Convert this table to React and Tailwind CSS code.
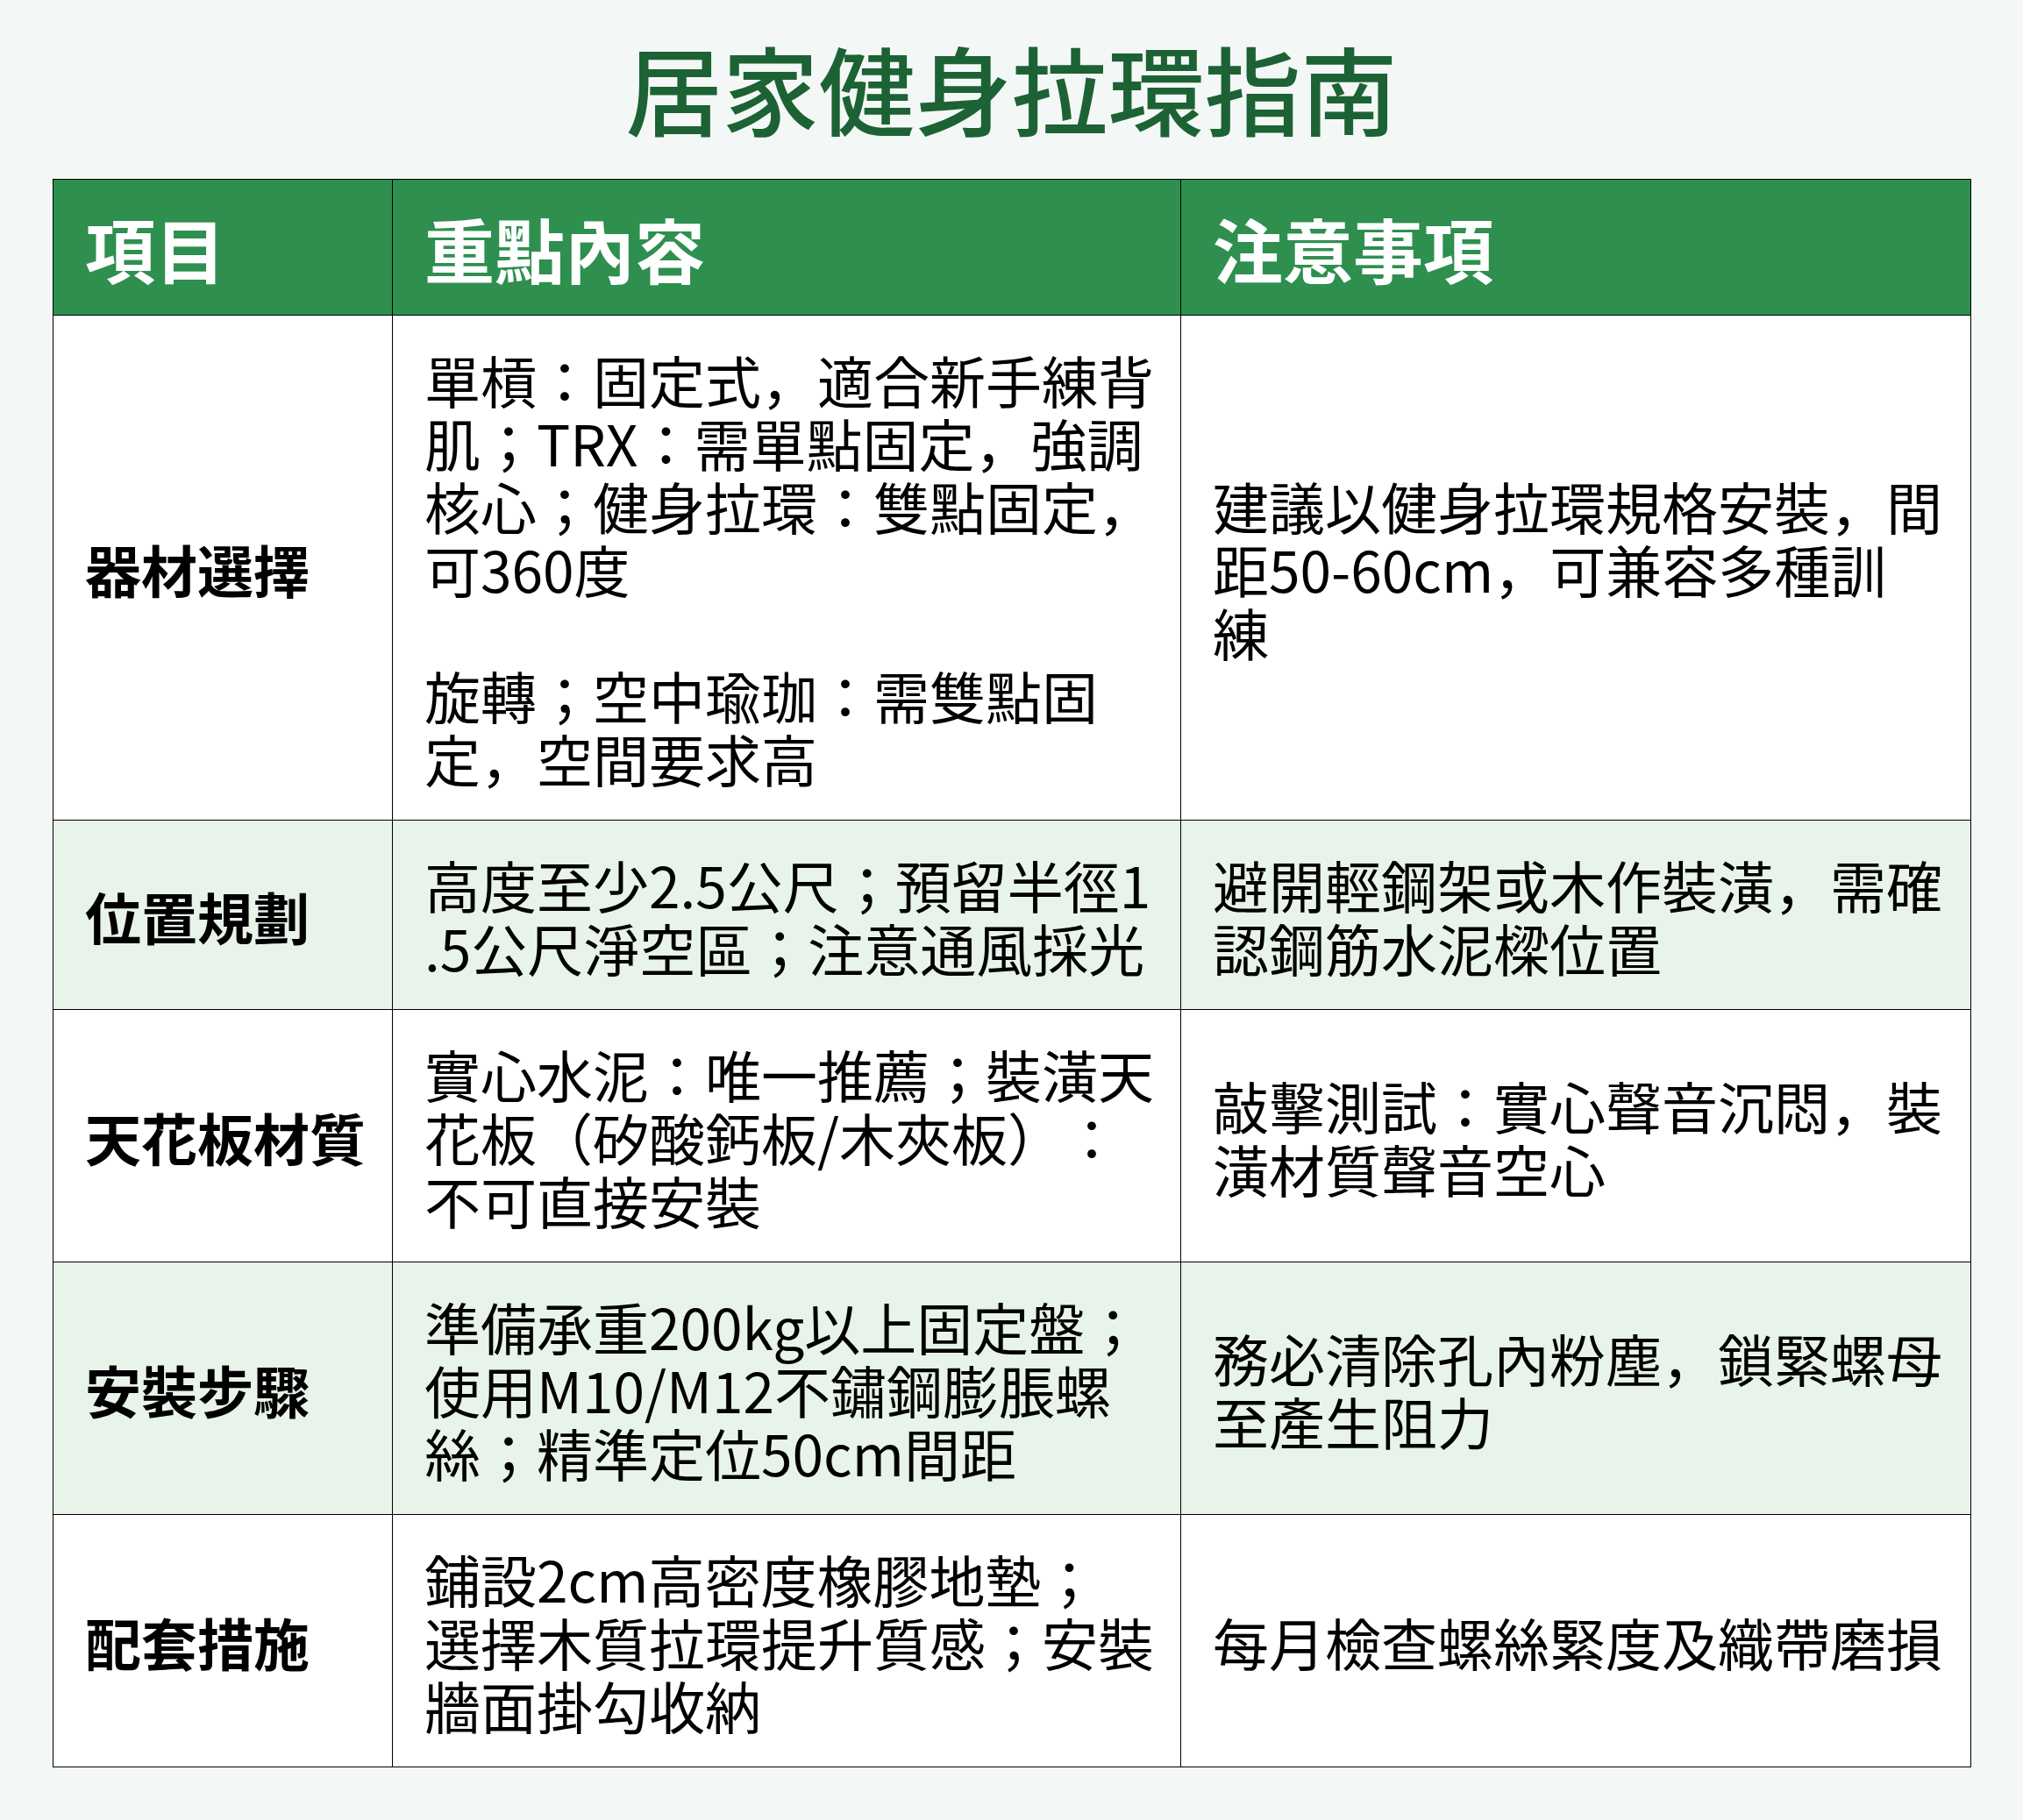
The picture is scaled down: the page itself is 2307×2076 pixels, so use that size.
import React from 'react';

const rows = [
  {
    item: '器材選擇',
    content: [
      '單槓：固定式，適合新手練背',
      '肌；TRX：需單點固定，強調',
      '核心；健身拉環：雙點固定，',
      '可360度',
      '',
      '旋轉；空中瑜珈：需雙點固',
      '定，空間要求高',
    ],
    note: ['建議以健身拉環規格安裝，間', '距50-60cm，可兼容多種訓', '練'],
  },
  {
    item: '位置規劃',
    content: ['高度至少2.5公尺；預留半徑1', '.5公尺淨空區；注意通風採光'],
    note: ['避開輕鋼架或木作裝潢，需確', '認鋼筋水泥樑位置'],
  },
  {
    item: '天花板材質',
    content: ['實心水泥：唯一推薦；裝潢天', '花板（矽酸鈣板/木夾板）：', '不可直接安裝'],
    note: ['敲擊測試：實心聲音沉悶，裝', '潢材質聲音空心'],
  },
  {
    item: '安裝步驟',
    content: ['準備承重200kg以上固定盤；', '使用M10/M12不鏽鋼膨脹螺', '絲；精準定位50cm間距'],
    note: ['務必清除孔內粉塵，鎖緊螺母', '至產生阻力'],
  },
  {
    item: '配套措施',
    content: ['鋪設2cm高密度橡膠地墊；', '選擇木質拉環提升質感；安裝', '牆面掛勾收納'],
    note: ['每月檢查螺絲緊度及織帶磨損'],
  },
];

const font = { fontFamily: '"Noto Sans CJK JP", "Noto Sans CJK TC", "Noto Sans", sans-serif' };

// each cell keeps the reference's own line breaks
const Lines = ({ lines }) =>
  lines.map((line, i) => (
    <span key={i} className="block min-h-[72px]">
      {line}
    </span>
  ));

const App = () => {
  return (
    <div style={font} className="min-h-[2076px] w-[2307px] bg-[#f3f8f6] [text-spacing-trim:space-all]">
      <h1 className="pt-[33px] pb-[39px] text-center text-[110px] leading-[132px] font-medium text-[#1d6234]">
        居家健身拉環指南
      </h1>
      <div className="px-[60px]">
        <table className="w-full table-fixed border-collapse border border-black">
          <colgroup>
            <col className="w-[387px]" />
            <col className="w-[899px]" />
            <col className="w-[901px]" />
          </colgroup>
          <thead>
            <tr className="bg-[#2e8f4f]">
              <th className="border border-black pl-[36px] py-[36px] text-left text-[80px] leading-[82px] font-bold text-white">
                項目
              </th>
              <th className="border border-black pl-[36px] py-[36px] text-left text-[80px] leading-[82px] font-bold text-white">
                重點內容
              </th>
              <th className="border border-black pl-[36px] py-[36px] text-left text-[80px] leading-[82px] font-bold text-white">
                注意事項
              </th>
            </tr>
          </thead>
          <tbody>
            {rows.map((row, i) => (
              <tr key={row.item} className={i % 2 === 1 ? 'bg-[#e8f4e9]' : 'bg-white'}>
                <td className="border border-black pl-[36px] pr-[16px] pt-[36px] pb-[35px] align-middle text-[64px] leading-[72px] font-bold text-black">
                  {row.item}
                </td>
                <td className="border border-black pl-[36px] pr-[12px] pt-[36px] pb-[35px] align-middle text-[64px] leading-[72px] whitespace-nowrap text-black">
                  <Lines lines={row.content} />
                </td>
                <td className="border border-black pl-[36px] pr-[12px] pt-[36px] pb-[35px] align-middle text-[64px] leading-[72px] whitespace-nowrap text-black">
                  <Lines lines={row.note} />
                </td>
              </tr>
            ))}
          </tbody>
        </table>
      </div>
    </div>
  );
};

export default App;
